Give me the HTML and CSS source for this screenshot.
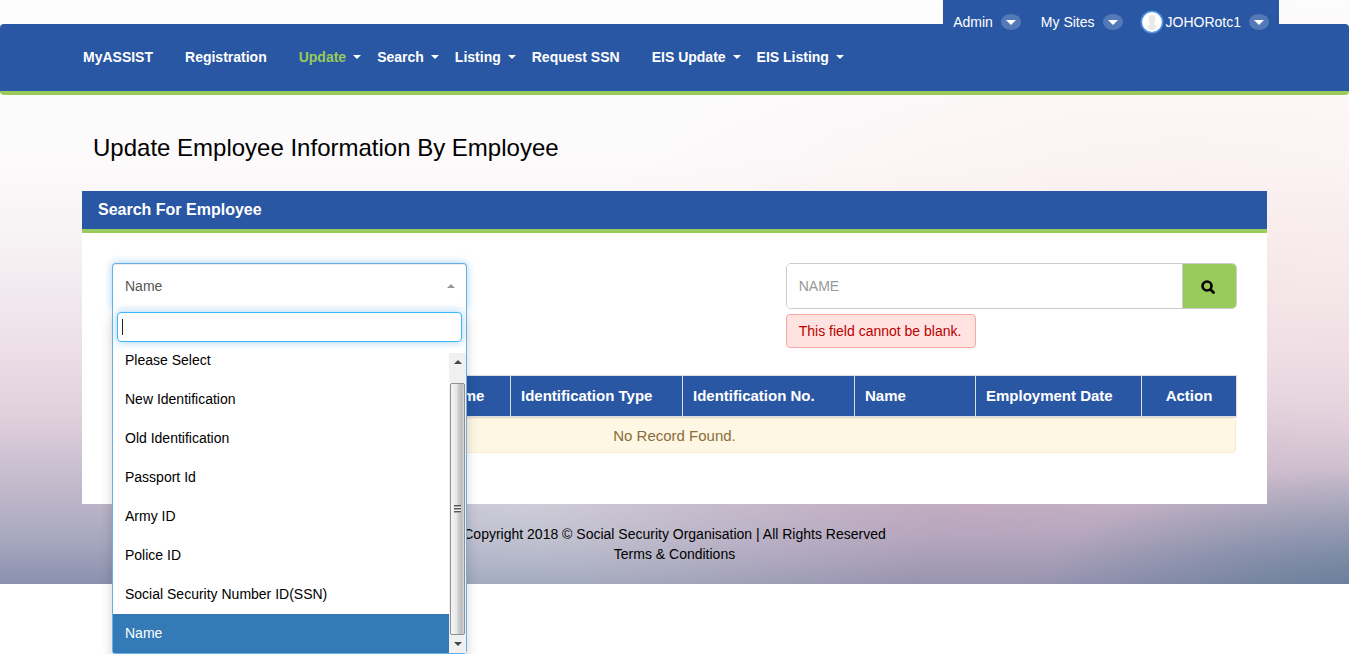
FILE: index.html
```html
<!DOCTYPE html>
<html lang="en">
<head>
<meta charset="utf-8">
<meta name="viewport" content="width=device-width, initial-scale=1">
<title>Update Employee Information By Employee</title>
<link rel="stylesheet" href="styles.css">
</head>
<body>
<div class="page">
  <header class="header">
    <div class="userbar">
      <button type="button" class="user-item">Admin <span class="pill"><i class="caret caret-lg"></i></span></button>
      <button type="button" class="user-item">My Sites <span class="pill"><i class="caret caret-lg"></i></span></button>
      <button type="button" class="user-item user-account">
        <svg class="avatar" viewBox="0 0 24 24" aria-hidden="true">
          <circle cx="12" cy="12" r="10.700" fill="#fff" stroke="#4d8fe0" stroke-width="1.600"/>
          <path d="M12 5c2.300 0 3.400 1.500 3.400 3.600 0 1.700-.7 3.200-1.200 4.100v2.200c1 .5 2 .8 2.300 2-.6 1.500-2.500 3.100-4.500 3.100s-3.900-1.600-4.500-3.100c.3-1.200 1.300-1.500 2.300-2v-2.200c-.5-.9-1.200-2.400-1.200-4.100C8.600 6.500 9.700 5 12 5z" fill="#e8e8e8"/>
        </svg>
        <span class="user-name">JOHORotc1</span> <span class="pill"><i class="caret caret-lg"></i></span>
      </button>
    </div>
    <nav class="nav">
      <a class="nav-link" href="#">MyASSIST</a>
      <a class="nav-link" href="#">Registration</a>
      <a class="nav-link has-menu active" href="#">Update<i class="caret"></i></a>
      <a class="nav-link has-menu" href="#">Search<i class="caret"></i></a>
      <a class="nav-link has-menu" href="#">Listing<i class="caret"></i></a>
      <a class="nav-link" href="#">Request SSN</a>
      <a class="nav-link has-menu" href="#">EIS Update<i class="caret"></i></a>
      <a class="nav-link has-menu" href="#">EIS Listing<i class="caret"></i></a>
    </nav>
  </header>

  <main class="container">
    <h1 class="title">Update Employee Information By Employee</h1>
    <section class="panel">
      <h2 class="panel-heading">Search For Employee</h2>
      <div class="panel-body">
        <form class="row">
          <div class="col-type">
            <div class="select">
              <button type="button" class="select-toggle" aria-haspopup="listbox" aria-expanded="true" aria-label="Search by">Name<i class="caret caret-up"></i></button>
              <div class="dropdown">
                <input class="dropdown-search" type="text" aria-label="Filter options">
                <div class="options-wrap">
                  <ul class="options" role="listbox" aria-label="Search by">
                    <li class="option" role="option">Please Select</li>
                    <li class="option" role="option">New Identification</li>
                    <li class="option" role="option">Old Identification</li>
                    <li class="option" role="option">Passport Id</li>
                    <li class="option" role="option">Army ID</li>
                    <li class="option" role="option">Police ID</li>
                    <li class="option" role="option">Social Security Number ID(SSN)</li>
                    <li class="option selected" role="option" aria-selected="true">Name</li>
                  </ul>
                  <div class="scrollbar" aria-hidden="true">
                    <span class="scroll-arrow"><i class="arrow arrow-up"></i></span>
                    <span class="scroll-gap"></span>
                    <span class="thumb"><i class="grip"></i></span>
                    <span class="scroll-arrow"><i class="arrow"></i></span>
                  </div>
                </div>
              </div>
            </div>
          </div>
          <div class="col-term">
            <div class="input-group">
              <input class="term" type="text" placeholder="NAME" aria-label="Name" aria-describedby="term-error">
              <button class="search-btn" type="button" aria-label="Search">
                <svg class="search-icon" viewBox="0 0 14 14" aria-hidden="true"><circle cx="6" cy="6" r="4.500" fill="none" stroke="#000" stroke-width="2.600"/><path d="M9.500 9.500l3 3" stroke="#000" stroke-width="2.800" stroke-linecap="round"/></svg>
              </button>
            </div>
            <div class="error" id="term-error">This field cannot be blank.</div>
          </div>
        </form>
        <table class="table">
          <colgroup>
            <col><col class="w-employer"><col class="w-id"><col class="w-id"><col class="w-name"><col class="w-date"><col class="w-action">
          </colgroup>
          <thead>
            <tr><th></th><th>Employer Name</th><th>Identification Type</th><th>Identification No.</th><th>Name</th><th>Employment Date</th><th class="center">Action</th></tr>
          </thead>
          <tbody>
            <tr><td colspan="7"><div class="alert">No Record Found.</div></td></tr>
          </tbody>
        </table>
      </div>
    </section>
  </main>
  <footer class="footer">
    <div>Copyright 2018 © Social Security Organisation | All Rights Reserved</div>
    <a class="terms" href="#">Terms &amp; Conditions</a>
  </footer>
</div>
</body>
</html>
```

FILE: styles.css
```css
*, *::before, *::after { box-sizing: border-box; }

body {
  min-height: 100vh;
  margin: 0;
  background: #fff;
  color: #000;
  font: 14px/20px "Liberation Sans", Arial, sans-serif;
}

button, input { font: inherit; }

.page {
  background:
    radial-gradient(ellipse 24% 22% at 101% 102%, rgba(84, 116, 144, 0.65), rgba(84, 116, 144, 0) 100%),
    radial-gradient(ellipse 36% 26% at 72% 87%, rgba(204, 160, 184, 0.42), rgba(204, 160, 184, 0) 100%),
    radial-gradient(ellipse 30% 34% at 40% 86%, rgba(226, 232, 234, 0.5), rgba(226, 232, 234, 0) 100%),
    radial-gradient(ellipse 44% 50% at 88% 44%, rgba(250, 222, 220, 0.4), rgba(250, 222, 220, 0) 100%),
    linear-gradient(to bottom, #fdfdfd 0%, #fcfafb 28%, #f5eff2 45%, #ecdfe7 60%, #dccddb 73%, #c0b8ca 84%, #a9a8c0 92%, #8a91ae 100%);
}

/* Header */
.userbar {
  position: relative;
  z-index: 1;
  display: flex;
  align-items: center;
  gap: 20px;
  width: fit-content;
  height: 44px;
  margin: 0 70px 0 auto;
  padding: 0 10px;
  background: #2957a4;
}

.user-item {
  display: flex;
  align-items: center;
  gap: 8px;
  padding: 0;
  border: 0;
  background: none;
  color: #fff;
}

.avatar { width: 24px; height: 24px; }
.user-account { gap: 2px; margin-left: -3px; }
.user-account .pill { margin-left: 6px; }

.pill {
  display: flex;
  align-items: center;
  justify-content: center;
  width: 20px;
  height: 16px;
  border-radius: 50%;
  background: #5479b7;
}

.caret {
  display: inline-block;
  border-top: 4px solid;
  border-right: 4px solid transparent;
  border-left: 4px solid transparent;
}

.caret-lg { border-width: 5px 5px 0; }
.caret-up { border-top: 0; border-bottom: 4px solid; color: #999; }

.nav {
  display: flex;
  align-items: flex-start;
  flex-wrap: wrap;
  min-height: 71px;
  margin-top: -20px;
  padding: 23px 67px 0;
  border-bottom: 4px solid #98ca5c;
  border-radius: 4px;
  background: #2957a4;
}

.nav-link {
  padding: 0 16px;
  color: #fff;
  font-weight: bold;
  text-decoration: none;
}

.has-menu { display: flex; align-items: center; gap: 7px; padding-right: 0; }
.nav-link.active { color: #98ca5c; }
.active .caret { border-top-color: #fff; }

/* Content */
.container { padding: 0 82px; }

.title {
  margin: 0;
  padding: 37px 11px 27px;
  font-size: 24px;
  font-weight: normal;
  line-height: 32px;
}

.panel { background: #fff; }

.panel-heading {
  margin: 0;
  padding: 9px 16px;
  border-bottom: 4px solid #98ca5c;
  background: #2957a4;
  color: #fff;
  font-size: 16px;
  line-height: 20px;
}

.panel-body { padding: 30px 30px 51px; }

.row {
  display: flex;
  justify-content: space-between;
  margin: 0 -15px 27px;
}

.col-type { width: calc(100% / 3); padding: 0 15px; }
.col-term { width: calc(500% / 12); padding: 0 15px; }

/* Select with its open list */
.select { position: relative; }

.select-toggle {
  display: flex;
  align-items: center;
  justify-content: space-between;
  width: 100%;
  height: 46px;
  padding: 0 11px 2px 12px;
  border: 1px solid #66afe9;
  border-bottom: 0;
  border-radius: 4px 4px 0 0;
  background: #fff;
  box-shadow: inset 0 1px 1px rgba(0, 0, 0, 0.08), 0 0 8px rgba(102, 175, 233, 0.6);
  color: #555;
}

.dropdown {
  position: absolute;
  top: 100%;
  left: 0;
  z-index: 2;
  width: 100%;
  border: 1px solid #66afe9;
  border-top: 0;
  border-radius: 0 0 4px 4px;
  background: #fff;
  box-shadow: 0 6px 12px rgba(0, 0, 0, 0.18);
}

.dropdown-search {
  display: block;
  width: calc(100% - 8px);
  height: 30px;
  margin: 3px 4px 11px;
  padding: 4px;
  border: 1px solid #38b9f6;
  border-radius: 4px;
  outline: 0;
  background: linear-gradient(#222, #222) 4px 50% / 1px 16px no-repeat #fff;
  box-shadow: 0 0 8px rgba(102, 175, 233, 0.6);
}

.options-wrap { display: flex; height: 300px; }

.options {
  display: flex;
  flex: 1;
  flex-direction: column;
  justify-content: flex-end;
  margin: 0;
  padding: 0;
  overflow: hidden;
  list-style: none;
}

.option { flex: none; padding: 9px 12px; line-height: 21px; }
.option.selected { background: #337ab7; color: #fff; }

.scrollbar {
  display: flex;
  flex-direction: column;
  width: 17px;
  padding: 0 1px;
  background: #f0f0f0;
}

.scroll-arrow {
  display: flex;
  align-items: center;
  justify-content: center;
  height: 18px;
}

.arrow {
  border-top: 4px solid #444;
  border-right: 4px solid transparent;
  border-left: 4px solid transparent;
}

.arrow-up { border-top: 0; border-bottom: 4px solid #444; }
.scroll-gap { height: 12px; }

.thumb {
  display: flex;
  flex: 1;
  align-items: center;
  justify-content: center;
  border: 1px solid #8f8f8f;
  border-radius: 2px;
  background: linear-gradient(to right, #f6f6f6, #e6e6e6 45%, #cfcfd1 55%, #bcbdc0 85%, #dcdcdc);
}

.grip {
  width: 7px;
  height: 8px;
  background: repeating-linear-gradient(#555 0 1px, #aaa 1px 2px, #f0f0f0 2px 3px);
}

/* Search box */
.input-group {
  display: flex;
  height: 46px;
  overflow: hidden;
  border: 1px solid #ccc;
  border-radius: 5px;
}

.term {
  flex: 1;
  min-width: 0;
  padding: 0 12px;
  border: 0;
  outline: 0;
  background: #fff;
}

.term::placeholder { color: #999; }

.search-btn {
  display: flex;
  align-items: center;
  justify-content: center;
  width: 54px;
  padding: 2px 4px 0 0;
  border: 0;
  border-left: 1px solid #ccc;
  background: #98ca5c;
}

.search-icon { width: 14px; height: 14px; }

.error {
  width: fit-content;
  margin-top: 5px;
  padding: 6px 14px 6px 12px;
  border: 1px solid #fba6a3;
  border-radius: 4px;
  background: #ffe3e1;
  color: #b80000;
}

/* Results */
.table {
  width: 100%;
  border-collapse: separate;
  border-spacing: 0;
  border-left: 1px solid #ddd;
  table-layout: fixed;
  font-size: 15px;
}

.w-employer { width: 150px; }
.w-id { width: 172px; }
.w-name { width: 121px; }
.w-date { width: 166px; }
.w-action { width: 95px; }

.table th {
  padding: 10px;
  border: solid #ddd;
  border-width: 1px 1px 2px 0;
  background: #2957a4;
  color: #fff;
  text-align: left;
  white-space: nowrap;
}

.table th.center { text-align: center; }
.table td { padding: 0 1px 0 0; }

.alert {
  padding: 7px 7px 6px;
  border: 1px solid #faebcc;
  border-radius: 4px;
  background: #fdf7e3;
  color: #8a6d3b;
  text-align: center;
}

.footer { padding: 20px; text-align: center; }
.terms { display: block; color: #000; text-decoration: none; }
```
